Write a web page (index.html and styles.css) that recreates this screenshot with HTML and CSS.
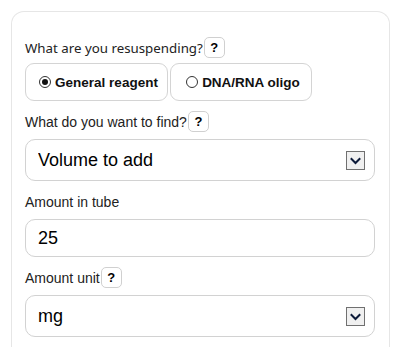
FILE: index.html
```html
<!DOCTYPE html>
<html lang="en">
<head>
    <meta charset="UTF-8">
    <meta name="viewport" content="width=device-width, initial-scale=1.0">
    <title>Resuspension calculator</title>
    <link rel="stylesheet" href="styles.css">
</head>
<body>
    <div class="card">
        <div class="field">
            <div class="label-row label-first">What are you resuspending?<button class="help-btn">?</button></div>
            <div class="radio-group">
                <label class="radio-btn">
                    <span class="radio-dot checked"></span>
                    General reagent
                </label>
                <label class="radio-btn">
                    <span class="radio-dot"></span>
                    DNA/RNA oligo
                </label>
            </div>
        </div>

        <div class="field">
            <div class="label-row">What do you want to find?<button class="help-btn">?</button></div>
            <div class="select-wrap">
                <select class="control">
                    <option>Volume to add</option>
                    <option>Concentration</option>
                </select>
                <span class="select-arrow">
                    <svg width="11" height="8" viewBox="0 0 11 8" fill="none" stroke="#0d1b3a" stroke-width="2" stroke-linecap="square">
                        <path d="M1.5 2 5.5 6 9.5 2"/>
                    </svg>
                </span>
            </div>
        </div>

        <div class="field">
            <div class="label-row">Amount in tube</div>
            <input class="control input" type="text" value="25">
        </div>

        <div class="field">
            <div class="label-row">Amount unit<button class="help-btn">?</button></div>
            <div class="select-wrap">
                <select class="control">
                    <option>mg</option>
                    <option>g</option>
                    <option>µg</option>
                </select>
                <span class="select-arrow">
                    <svg width="11" height="8" viewBox="0 0 11 8" fill="none" stroke="#0d1b3a" stroke-width="2" stroke-linecap="square">
                        <path d="M1.5 2 5.5 6 9.5 2"/>
                    </svg>
                </span>
            </div>
        </div>
    </div>
</body>
</html>
```

FILE: styles.css
```css
* {
    margin: 0;
    padding: 0;
    box-sizing: border-box;
}

body {
    font-family: "Liberation Sans", Arial, sans-serif;
    background: #ffffff;
    color: #1a1a1a;
    padding: 11px 11px 0 11px;
    height: 347px;
    overflow: hidden;
}

.card {
    border: 1px solid #e6e6e6;
    border-bottom: none;
    border-radius: 13px 13px 0 0;
    padding: 25px 14px 20px 13px;
    min-height: 400px;
}

.field {
    margin-bottom: 10px;
}

.label-row {
    display: flex;
    align-items: center;
    height: 21px;
    font-size: 14px;
    color: #222;
    margin-bottom: 7px;
}

.label-first {
    font-family: "Noto Sans", "Open Sans", sans-serif;
    font-size: 13.3px;
    margin-bottom: 5px;
}

.help-btn {
    width: 21px;
    height: 21px;
    border: 1px solid #d0d0d0;
    border-radius: 5px;
    background: #fff;
    font-family: "Liberation Sans", Arial, sans-serif;
    font-weight: bold;
    font-size: 13px;
    color: #000;
    margin-left: 1px;
}

.radio-group {
    display: flex;
    gap: 2px;
}

.radio-btn {
    display: flex;
    align-items: center;
    justify-content: center;
    gap: 4px;
    height: 38px;
    border: 1px solid #d4d4d4;
    border-radius: 9px;
    font-family: "Liberation Sans", Arial, sans-serif;
    font-weight: bold;
    font-size: 13.5px;
    color: #111;
    white-space: nowrap;
    padding-left: 4px;
}

.radio-btn:first-child {
    width: 143px;
}

.radio-btn:last-child {
    width: 142px;
}

.radio-dot {
    width: 12px;
    height: 12px;
    border: 1px solid #333;
    border-radius: 50%;
    display: inline-flex;
    align-items: center;
    justify-content: center;
    flex-shrink: 0;
}

.radio-dot.checked::after {
    content: "";
    width: 6px;
    height: 6px;
    border-radius: 50%;
    background: #111;
}

.select-wrap {
    position: relative;
}

.control {
    display: block;
    width: 100%;
    height: 42px;
    border: 1px solid #d2d2d2;
    border-radius: 10px;
    background: #fff;
    font-family: "Liberation Sans", Arial, sans-serif;
    font-size: 18px;
    color: #000;
    padding: 0 12px;
    appearance: none;
    -webkit-appearance: none;
    outline: none;
}

.input {
    height: 38px;
}

.select-arrow {
    position: absolute;
    right: 10px;
    top: 12px;
    width: 19px;
    height: 19px;
    border: 1px solid #707070;
    background: #f0f0f0;
    display: flex;
    align-items: center;
    justify-content: center;
    pointer-events: none;
}
```
